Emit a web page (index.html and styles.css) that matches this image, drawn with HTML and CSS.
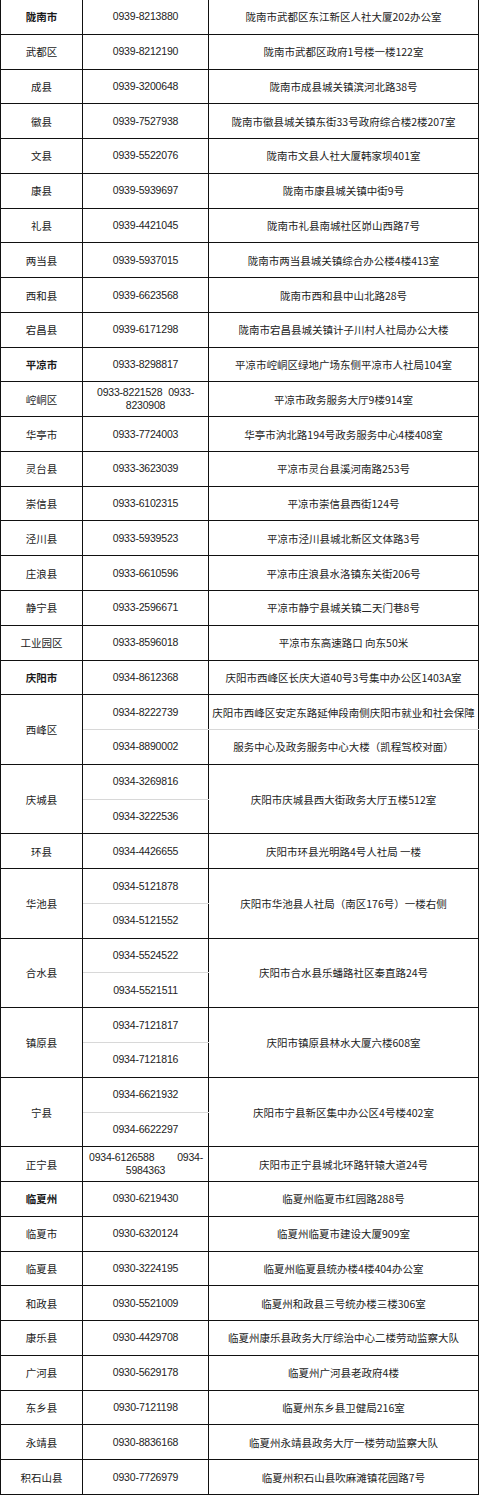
FILE: index.html
```html
<!DOCTYPE html>
<html lang="zh-CN">
<head>
<meta charset="utf-8">
<link rel="stylesheet" href="styles.css">
</head>
<body>
<table class="grid">
  <colgroup><col class="c1"><col class="c2"><col class="c3"></colgroup>
  <tbody>
    <tr><td class="name city">陇南市</td><td class="tel">0939-8213880</td><td class="addr">陇南市武都区东江新区人社大厦202办公室</td></tr>
    <tr><td class="name">武都区</td><td class="tel">0939-8212190</td><td class="addr">陇南市武都区政府1号楼一楼122室</td></tr>
    <tr><td class="name">成县</td><td class="tel">0939-3200648</td><td class="addr">陇南市成县城关镇滨河北路38号</td></tr>
    <tr><td class="name">徽县</td><td class="tel">0939-7527938</td><td class="addr">陇南市徽县城关镇东街33号政府综合楼2楼207室</td></tr>
    <tr><td class="name">文县</td><td class="tel">0939-5522076</td><td class="addr">陇南市文县人社大厦韩家坝401室</td></tr>
    <tr><td class="name">康县</td><td class="tel">0939-5939697</td><td class="addr">陇南市康县城关镇中街9号</td></tr>
    <tr><td class="name">礼县</td><td class="tel">0939-4421045</td><td class="addr">陇南市礼县南城社区峁山西路7号</td></tr>
    <tr><td class="name">两当县</td><td class="tel">0939-5937015</td><td class="addr">陇南市两当县城关镇综合办公楼4楼413室</td></tr>
    <tr><td class="name">西和县</td><td class="tel">0939-6623568</td><td class="addr">陇南市西和县中山北路28号</td></tr>
    <tr><td class="name">宕昌县</td><td class="tel">0939-6171298</td><td class="addr">陇南市宕昌县城关镇计子川村人社局办公大楼</td></tr>
    <tr><td class="name city">平凉市</td><td class="tel">0933-8298817</td><td class="addr">平凉市崆峒区绿地广场东侧平凉市人社局104室</td></tr>
    <tr><td class="name">崆峒区</td><td class="tel"><div class="pair pair-a"><span>0933-8221528</span><span>0933-</span></div><div class="rest">8230908</div></td><td class="addr">平凉市政务服务大厅9楼914室</td></tr>
    <tr><td class="name">华亭市</td><td class="tel">0933-7724003</td><td class="addr">华亭市汭北路194号政务服务中心4楼408室</td></tr>
    <tr><td class="name">灵台县</td><td class="tel">0933-3623039</td><td class="addr">平凉市灵台县溪河南路253号</td></tr>
    <tr><td class="name">崇信县</td><td class="tel">0933-6102315</td><td class="addr">平凉市崇信县西街124号</td></tr>
    <tr><td class="name">泾川县</td><td class="tel">0933-5939523</td><td class="addr">平凉市泾川县城北新区文体路3号</td></tr>
    <tr><td class="name">庄浪县</td><td class="tel">0933-6610596</td><td class="addr">平凉市庄浪县水洛镇东关街206号</td></tr>
    <tr><td class="name">静宁县</td><td class="tel">0933-2596671</td><td class="addr">平凉市静宁县城关镇二天门巷8号</td></tr>
    <tr><td class="name">工业园区</td><td class="tel">0933-8596018</td><td class="addr">平凉市东高速路口 向东50米</td></tr>
    <tr><td class="name city">庆阳市</td><td class="tel">0934-8612368</td><td class="addr">庆阳市西峰区长庆大道40号3号集中办公区1403A室</td></tr>
    <tr class="top"><td class="name" rowspan="2">西峰区</td><td class="tel">0934-8222739</td><td class="addr">庆阳市西峰区安定东路延伸段南侧庆阳市就业和社会保障</td></tr>
    <tr class="bottom"><td class="tel">0934-8890002</td><td class="addr">服务中心及政务服务中心大楼（凯程驾校对面）</td></tr>
    <tr class="top"><td class="name" rowspan="2">庆城县</td><td class="tel">0934-3269816</td><td class="addr" rowspan="2">庆阳市庆城县西大街政务大厅五楼512室</td></tr>
    <tr class="bottom"><td class="tel">0934-3222536</td></tr>
    <tr><td class="name">环县</td><td class="tel">0934-4426655</td><td class="addr">庆阳市环县光明路4号人社局 一楼</td></tr>
    <tr class="top"><td class="name" rowspan="2">华池县</td><td class="tel">0934-5121878</td><td class="addr" rowspan="2">庆阳市华池县人社局（南区176号）一楼右侧</td></tr>
    <tr class="bottom"><td class="tel">0934-5121552</td></tr>
    <tr class="top"><td class="name" rowspan="2">合水县</td><td class="tel">0934-5524522</td><td class="addr" rowspan="2">庆阳市合水县乐蟠路社区秦直路24号</td></tr>
    <tr class="bottom"><td class="tel">0934-5521511</td></tr>
    <tr class="top"><td class="name" rowspan="2">镇原县</td><td class="tel">0934-7121817</td><td class="addr" rowspan="2">庆阳市镇原县林水大厦六楼608室</td></tr>
    <tr class="bottom"><td class="tel">0934-7121816</td></tr>
    <tr class="top"><td class="name" rowspan="2">宁县</td><td class="tel">0934-6621932</td><td class="addr" rowspan="2">庆阳市宁县新区集中办公区4号楼402室</td></tr>
    <tr class="bottom"><td class="tel">0934-6622297</td></tr>
    <tr><td class="name">正宁县</td><td class="tel"><div class="pair pair-b"><span>0934-6126588</span><span>0934-</span></div><div class="rest">5984363</div></td><td class="addr">庆阳市正宁县城北环路轩辕大道24号</td></tr>
    <tr><td class="name city">临夏州</td><td class="tel">0930-6219430</td><td class="addr">临夏州临夏市红园路288号</td></tr>
    <tr><td class="name">临夏市</td><td class="tel">0930-6320124</td><td class="addr">临夏州临夏市建设大厦909室</td></tr>
    <tr><td class="name">临夏县</td><td class="tel">0930-3224195</td><td class="addr">临夏州临夏县统办楼4楼404办公室</td></tr>
    <tr><td class="name">和政县</td><td class="tel">0930-5521009</td><td class="addr">临夏州和政县三号统办楼三楼306室</td></tr>
    <tr><td class="name">康乐县</td><td class="tel">0930-4429708</td><td class="addr">临夏州康乐县政务大厅综治中心二楼劳动监察大队</td></tr>
    <tr><td class="name">广河县</td><td class="tel">0930-5629178</td><td class="addr">临夏州广河县老政府4楼</td></tr>
    <tr><td class="name">东乡县</td><td class="tel">0930-7121198</td><td class="addr">临夏州东乡县卫健局216室</td></tr>
    <tr><td class="name">永靖县</td><td class="tel">0930-8836168</td><td class="addr">临夏州永靖县政务大厅一楼劳动监察大队</td></tr>
    <tr><td class="name">积石山县</td><td class="tel">0930-7726979</td><td class="addr">临夏州积石山县吹麻滩镇花园路7号</td></tr>
  </tbody>
</table>
</body>
</html>
```

FILE: styles.css
```css
html, body {
  margin: 0;
  padding: 0;
  background: #fff;
}

body {
  font-family: "Noto Sans CJK SC", "Liberation Sans", sans-serif;
  color: #1a1a1a;
}

.grid {
  width: 478px;
  border-collapse: collapse;
  table-layout: fixed;
  margin-top: -1px;
}

.c1 { width: 82px; }
.c2 { width: 126px; }
.c3 { width: 270px; }

.grid tr {
  height: 34.77px;
}

.grid td {
  border: 1px solid #111;
  padding: 0;
  text-align: center;
  vertical-align: middle;
  font-size: 10.5px;
  line-height: 13px;
  white-space: nowrap;
}

.name {
  font-size: 11px;
}

.city {
  font-weight: 700;
}

.tel {
  font-family: "Liberation Sans", "Noto Sans CJK SC", sans-serif;
  font-size: 10px;
  letter-spacing: -0.2px;
  color: #222;
}

.addr {
  color: #222;
}

.top .tel,
.top .addr:not([rowspan]) {
  border-bottom: 1px solid #d8d8d8;
}

.bottom .tel,
.bottom .addr {
  border-top: 1px solid #d8d8d8;
}

.pair {
  display: flex;
  justify-content: space-between;
}

.pair-a {
  margin: 0 14px;
}

.pair-b {
  margin: 0 5px 0 6px;
}

.rest {
  text-align: center;
}
```
